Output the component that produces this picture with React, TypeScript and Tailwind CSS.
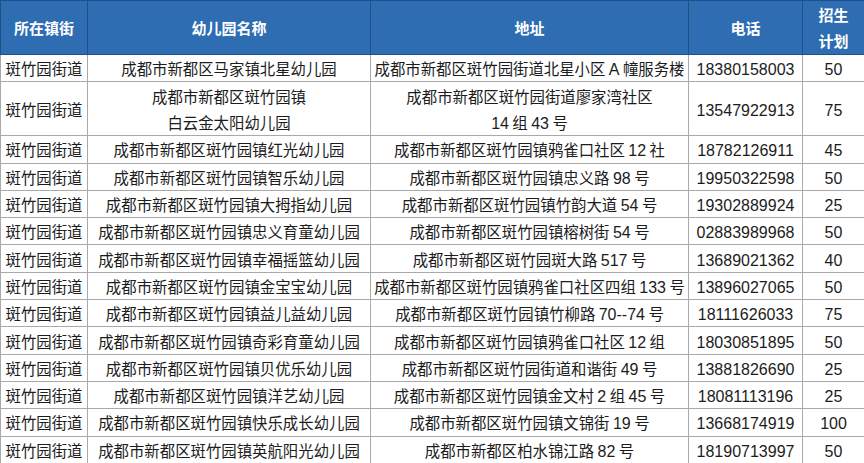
const rows: [string, string, string, string][] = [
  ['成都市新都区马家镇北星幼儿园', '成都市新都区斑竹园街道北星小区 A 幢服务楼', '18380158003', '50'],
  ['成都市新都区斑竹园镇\n白云金太阳幼儿园', '成都市新都区斑竹园街道廖家湾社区\n14 组 43 号', '13547922913', '75'],
  ['成都市新都区斑竹园镇红光幼儿园', '成都市新都区斑竹园镇鸦雀口社区 12 社', '18782126911', '45'],
  ['成都市新都区斑竹园镇智乐幼儿园', '成都市新都区斑竹园镇忠义路 98 号', '19950322598', '50'],
  ['成都市新都区斑竹园镇大拇指幼儿园', '成都市新都区斑竹园镇竹韵大道 54 号', '19302889924', '25'],
  ['成都市新都区斑竹园镇忠义育童幼儿园', '成都市新都区斑竹园镇榕树街 54 号', '02883989968', '50'],
  ['成都市新都区斑竹园镇幸福摇篮幼儿园', '成都市新都区斑竹园斑大路 517 号', '13689021362', '40'],
  ['成都市新都区斑竹园镇金宝宝幼儿园', '成都市新都区斑竹园镇鸦雀口社区四组 133 号', '13896027065', '50'],
  ['成都市新都区斑竹园镇益儿益幼儿园', '成都市新都区斑竹园镇竹柳路 70--74 号', '18111626033', '75'],
  ['成都市新都区斑竹园镇奇彩育童幼儿园', '成都市新都区斑竹园镇鸦雀口社区 12 组', '18030851895', '50'],
  ['成都市新都区斑竹园镇贝优乐幼儿园', '成都市新都区斑竹园街道和谐街 49 号', '13881826690', '25'],
  ['成都市新都区斑竹园镇洋艺幼儿园', '成都市新都区斑竹园镇金文村 2 组 45 号', '18081113196', '25'],
  ['成都市新都区斑竹园镇快乐成长幼儿园', '成都市新都区斑竹园镇文锦街 19 号', '13668174919', '100'],
  ['成都市新都区斑竹园镇英航阳光幼儿园', '成都市新都区柏水锦江路 82 号', '18190713997', '50'],
]

const cell = 'border border-[#a9a9a9] text-center align-middle p-0 whitespace-pre-line'
const head = 'border border-[#1f4f86] text-center align-middle p-0 font-bold text-white text-[15px] leading-[26px]'

// latin runs (digits, A, dashes) are set a touch larger, like the office font in the source sheet
function Mixed({ text }: { text: string }) {
  const parts = text.split(/([0-9A-Za-z\-]+)/)
  return (
    <>
      {parts.map((p, i) =>
        /^[0-9A-Za-z\-]+$/.test(p) ? (
          <span key={i} className="font-['Liberation_Sans'] text-[16px] leading-none">
            {p}
          </span>
        ) : (
          p
        )
      )}
    </>
  )
}

export default function App() {
  return (
    <div
      className="w-[864px] h-[463px] overflow-hidden bg-white"
      style={{ fontFamily: '"Noto Sans CJK SC", sans-serif' }}
    >
      <table className="table-fixed border-collapse w-[864px] text-[15.4px] text-[#1c1c1c] leading-[24px]">
        <colgroup>
          <col className="w-[87px]" />
          <col className="w-[283px]" />
          <col className="w-[318px]" />
          <col className="w-[114px]" />
          <col className="w-[62px]" />
        </colgroup>
        <thead>
          <tr className="h-[54px] bg-[#2f6db3]">
            <th className={head}>所在镇街</th>
            <th className={head}>幼儿园名称</th>
            <th className={head}>地址</th>
            <th className={head}>电话</th>
            <th className={head}>
              招生
              <br />
              计划
            </th>
          </tr>
        </thead>
        <tbody>
          {rows.map((r, i) => (
            <tr key={i} className={i === 1 ? 'h-[54px] leading-[26px]' : 'h-[27.3px]'}>
              <td className={cell}>斑竹园街道</td>
              <td className={cell}>{r[0]}</td>
              <td className={cell}>
                <Mixed text={r[1]} />
              </td>
              <td className={cell}>
                <Mixed text={r[2]} />
              </td>
              <td className={cell}>
                <Mixed text={r[3]} />
              </td>
            </tr>
          ))}
        </tbody>
      </table>
    </div>
  )
}
